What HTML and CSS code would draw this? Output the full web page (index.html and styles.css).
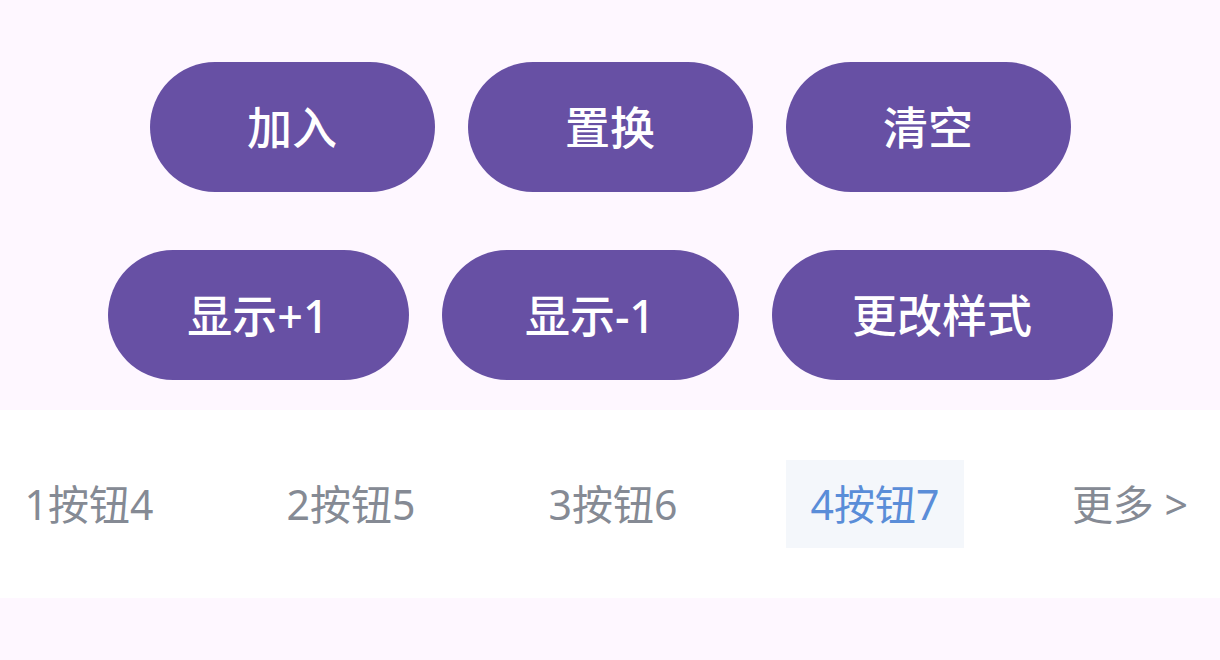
FILE: index.html
```html
<!DOCTYPE html>
<html lang="zh-CN">
<head>
<meta charset="utf-8">
<link rel="stylesheet" href="styles.css">
</head>
<body>
<div class="page">
  <div class="actions">
    <div class="row row-1">
      <button class="btn">加入</button>
      <button class="btn">置换</button>
      <button class="btn">清空</button>
    </div>
    <div class="row row-2">
      <button class="btn btn-plus">显示+1</button>
      <button class="btn btn-minus">显示-1</button>
      <button class="btn btn-style">更改样式</button>
    </div>
  </div>
  <div class="tabbar">
    <div class="tabs">
      <div class="tab">1按钮4</div>
      <div class="tab">2按钮5</div>
      <div class="tab">3按钮6</div>
      <div class="tab tab-active">4按钮7</div>
    </div>
    <div class="more">更多 &gt;</div>
  </div>
</div>
</body>
</html>
```
FILE: styles.css
```css
html, body {
  margin: 0;
  padding: 0;
  background: #fef7ff;
}
body {
  width: 1220px;
  height: 660px;
  overflow: hidden;
  font-family: "Noto Sans", "Noto Sans CJK SC", sans-serif;
}
.page {
  display: flex;
  flex-direction: column;
}
.actions {
  display: flex;
  flex-direction: column;
  align-items: center;
  padding-top: 62px;
  gap: 58px;
  padding-bottom: 30px;
}
.row {
  display: flex;
  gap: 33px;
  justify-content: center;
}
.btn {
  height: 130px;
  width: 285px;
  padding: 0 0 3px;
  border: none;
  border-radius: 65px;
  background: #6750a4;
  color: #ffffff;
  font-family: "Noto Sans", "Noto Sans CJK SC", sans-serif;
  font-size: 45px;
  font-weight: 500;
  display: flex;
  align-items: center;
  justify-content: center;
  box-sizing: border-box;
}
.btn-plus {
  width: 301px;
}
.btn-minus {
  width: 297px;
}
.btn-style {
  width: 341px;
}
.tabbar {
  height: 188px;
  background: #ffffff;
  display: flex;
  align-items: center;
}
.tabs {
  display: flex;
  gap: 84px;
}
.tab {
  width: 178px;
  height: 88px;
  padding-bottom: 5px;
  box-sizing: border-box;
  display: flex;
  align-items: center;
  justify-content: center;
  font-size: 41px;
  color: #858a94;
}
.tab-active {
  background: #f4f7fb;
  color: #5a8dd8;
}
.more {
  margin-left: auto;
  padding-right: 32px;
  padding-bottom: 5px;
  font-size: 41px;
  color: #858a94;
}
```
